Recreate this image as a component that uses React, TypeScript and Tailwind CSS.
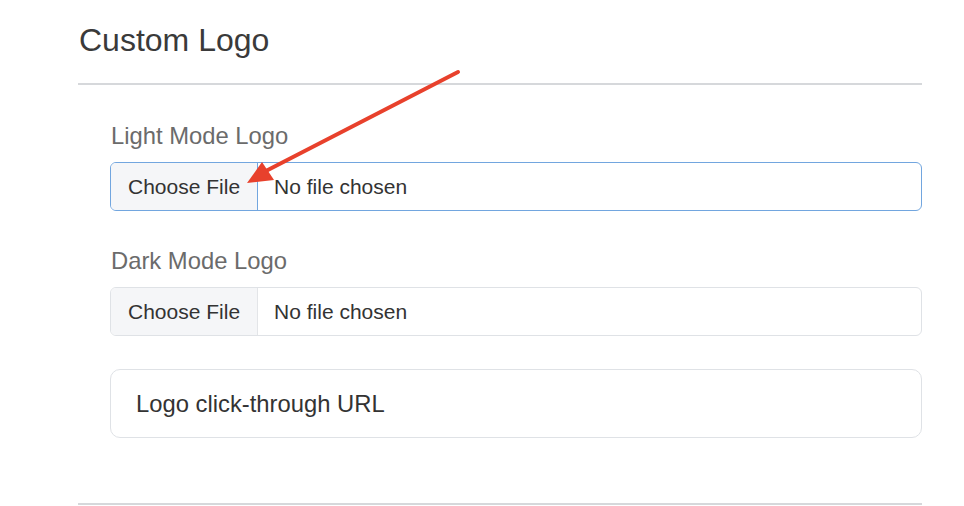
import React from 'react';

const FONT = { fontFamily: '"Liberation Sans", Arial, sans-serif' };

function FileInput({ label, focused }: { label: string; focused?: boolean }) {
  return (
    <div>
      <div className="text-[23.8px] leading-[28px] text-[#6b6b6b] pl-[1px]">{label}</div>
      <div
        className={`mt-[12px] flex h-[49px] w-full overflow-hidden rounded-[6px] border-[1.5px] bg-white ${
          focused ? 'border-[#72a6df]' : 'border-[#dfe2e6]'
        }`}
      >
        <div
          className={`flex items-center bg-[#f5f6f8] pl-[17px] pr-[17px] text-[21px] text-[#333] border-r-[1.5px] ${
            focused ? 'border-[#72a6df]' : 'border-[#e3e5e8]'
          }`}
        >
          Choose File
        </div>
        <div className="flex items-center pl-[16px] text-[21px] text-[#333]">No file chosen</div>
      </div>
    </div>
  );
}

export default function App() {
  return (
    <div className="relative min-h-screen bg-white" style={FONT}>
      <div className="ml-[78px] w-[844px] pt-[22px]">
        <h1 className="text-[32px] leading-[37px] text-[#3a3a3a] pl-[1px]">Custom Logo</h1>
        <div className="mt-[24px] h-[2px] bg-[#d6d8db]" />
        <div className="pl-[32px] pt-[37px]">
          <FileInput label="Light Mode Logo" focused />
          <div className="mt-[36px]">
            <FileInput label="Dark Mode Logo" />
          </div>
          <div className="mt-[33px] flex h-[69px] items-center rounded-[10px] border-[1.5px] border-[#dfe2e6] bg-white pl-[25px] text-[23.8px] text-[#333]">
            Logo click-through URL
          </div>
        </div>
        <div className="mt-[65px] h-[2px] bg-[#d6d8db]" />
      </div>

      {/* annotation arrow */}
      <svg className="pointer-events-none absolute left-0 top-0" width="964" height="506">
        <line x1="458" y1="72" x2="262" y2="173" stroke="#e8412c" strokeWidth="4" strokeLinecap="round" />
        <polygon points="247,183 262,162 274,180" fill="#e8412c" />
      </svg>
    </div>
  );
}
